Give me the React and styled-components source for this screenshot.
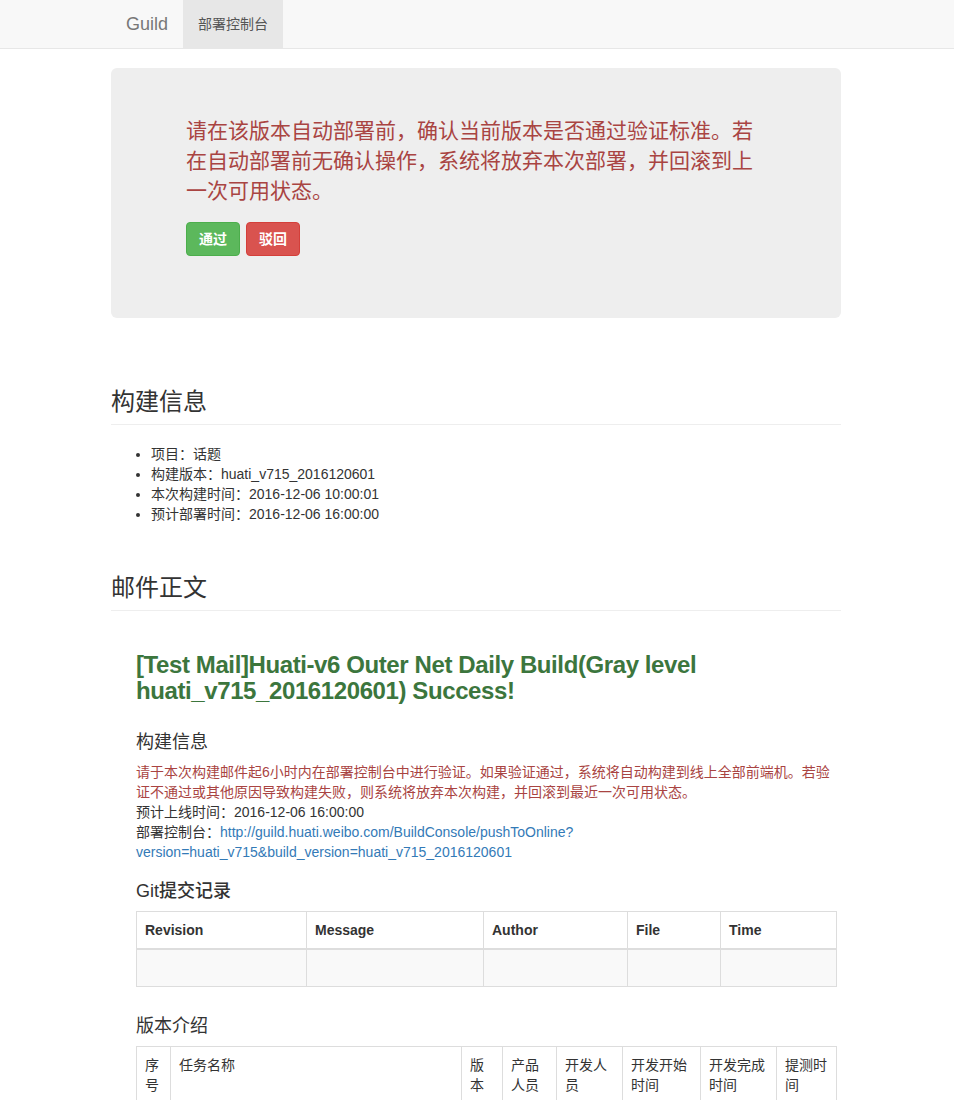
import React from "react";
import styled, { createGlobalStyle } from "styled-components";

const GlobalStyle = createGlobalStyle`
  html, body {
    margin: 0;
    padding: 0;
    background: #fff;
  }
  body {
    font-family: "Liberation Sans", "Noto Sans CJK SC", sans-serif;
    font-size: 14px;
    line-height: 20px;
    color: #333;
  }
  * { box-sizing: border-box; }
`;

const NavBar = styled.nav`
  background: #f8f8f8;
  border-bottom: 1px solid #e7e7e7;
  margin-bottom: 19px;
`;

const NavInner = styled.div`
  width: 732px;
  padding-right: 2px;
  margin: 0 auto;
  display: flex;
  align-items: stretch;
  height: 48px;
`;

const Brand = styled.a`
  display: block;
  padding: 14px 15px;
  font-size: 18px;
  line-height: 20px;
  color: #777;
  text-decoration: none;
`;

const NavItem = styled.a`
  display: block;
  padding: 14px 15px;
  font-size: 14px;
  line-height: 20px;
  color: #555;
  text-decoration: none;
  background: ${(p) => (p.$active ? "#e7e7e7" : "transparent")};
`;

const Container = styled.main`
  width: 732px;
  padding-right: 2px;
  margin: 0 auto;
  display: flex;
  flex-direction: column;
`;

const Jumbotron = styled.section`
  background: #eee;
  border-radius: 6px;
  padding: 48px 75px 62px;
`;

const JumboText = styled.p`
  margin: 0;
  font-size: 21px;
  line-height: 30px;
  color: #a94442;
`;

const ButtonRow = styled.div`
  display: flex;
  gap: 6px;
  margin-top: 16px;
`;

const Button = styled.button`
  font-family: inherit;
  font-size: 14px;
  line-height: 20px;
  font-weight: 700;
  padding: 6px 12px;
  border-radius: 4px;
  color: #fff;
  cursor: pointer;
  border: 1px solid ${(p) => (p.$variant === "danger" ? "#d43f3a" : "#4cae4c")};
  background: ${(p) => (p.$variant === "danger" ? "#d9534f" : "#5cb85c")};
`;

const PageHeader = styled.h3`
  margin: ${(p) => p.$mt}px 0 0;
  padding-bottom: 9px;
  border-bottom: 1px solid #eee;
  font-size: 24px;
  line-height: 26px;
  font-weight: 400;
  color: #333;
`;

const InfoList = styled.ul`
  margin: 19px 0 0;
  padding-left: 40px;
`;

const InfoItem = styled.li`
  line-height: 20px;
`;

const MailBody = styled.div`
  margin-top: 19px;
  padding-left: 25px;
  width: 725px;
  display: flex;
  flex-direction: column;
`;

const MailTitle = styled.h2`
  margin: 22px 0 0;
  font-size: 24px;
  line-height: 26px;
  font-weight: 700;
  letter-spacing: -0.4px;
  color: #3c763d;
`;

const MailHeading = styled.h4`
  margin: ${(p) => p.$mt}px 0 0;
  font-size: 18px;
  line-height: 20px;
  font-weight: ${(p) => (p.$strong ? 500 : 400)};
  color: #333;
`;

const InfoBlock = styled.div`
  margin-top: 10px;
`;

const Line = styled.div`
  color: ${(p) => (p.$danger ? "#a94442" : "#333")};
  line-height: 20px;
`;

const MailLink = styled.a`
  color: #337ab7;
  text-decoration: none;
`;

const DataTable = styled.table`
  margin-top: 10px;
  width: 700px;
  table-layout: fixed;
  border-collapse: collapse;
  border: 1px solid #ddd;
`;

const Col = styled.col`
  width: ${(p) => p.$w}px;
`;

const HeadCell = styled.th`
  text-align: left;
  vertical-align: bottom;
  padding: 8px;
  line-height: 20px;
  font-weight: 700;
  border: 1px solid #ddd;
  border-bottom: 2px solid #ddd;
`;

const Row = styled.tr`
  background: ${(p) => (p.$striped ? "#f9f9f9" : "#fff")};
`;

const Cell = styled.td`
  vertical-align: top;
  padding: 8px;
  line-height: 20px;
  border: 1px solid #ddd;
  color: #333;
`;

const gitCols = [
  { w: 170, label: "Revision" },
  { w: 177, label: "Message" },
  { w: 144, label: "Author" },
  { w: 93, label: "File" },
  { w: 116, label: "Time" },
];

const versionCols = [
  { w: 34, label: "序号" },
  { w: 291, label: "任务名称" },
  { w: 41, label: "版本" },
  { w: 54, label: "产品人员" },
  { w: 66, label: "开发人员" },
  { w: 78, label: "开发开始时间" },
  { w: 76, label: "开发完成时间" },
  { w: 60, label: "提测时间" },
];

export default function App() {
  return (
    <>
      <GlobalStyle />
      <NavBar>
        <NavInner>
          <Brand href="#">Guild</Brand>
          <NavItem href="#" $active>
            部署控制台
          </NavItem>
        </NavInner>
      </NavBar>
      <Container>
        <Jumbotron>
          <JumboText>
            请在该版本自动部署前，确认当前版本是否通过验证标准。若在自动部署前无确认操作，系统将放弃本次部署，并回滚到上一次可用状态。
          </JumboText>
          <ButtonRow>
            <Button $variant="success">通过</Button>
            <Button $variant="danger">驳回</Button>
          </ButtonRow>
        </Jumbotron>

        <PageHeader $mt={71}>构建信息</PageHeader>
        <InfoList>
          <InfoItem>项目：话题</InfoItem>
          <InfoItem>构建版本：huati_v715_2016120601</InfoItem>
          <InfoItem>本次构建时间：2016-12-06 10:00:01</InfoItem>
          <InfoItem>预计部署时间：2016-12-06 16:00:00</InfoItem>
        </InfoList>

        <PageHeader $mt={51}>邮件正文</PageHeader>
        <MailBody>
          <MailTitle>
            [Test Mail]Huati-v6 Outer Net Daily Build(Gray level
            huati_v715_2016120601) Success!
          </MailTitle>
          <MailHeading $mt={28}>构建信息</MailHeading>
          <InfoBlock>
            <Line $danger>
              请于本次构建邮件起6小时内在部署控制台中进行验证。如果验证通过，系统将自动构建到线上全部前端机。若验证不通过或其他原因导致构建失败，则系统将放弃本次构建，并回滚到最近一次可用状态。
            </Line>
            <Line>预计上线时间：2016-12-06 16:00:00</Line>
            <Line>
              部署控制台：
              <MailLink href="#">
                http://guild.huati.weibo.com/BuildConsole/pushToOnline?
                <wbr />
                version=huati_v715&amp;build_version=huati_v715_2016120601
              </MailLink>
            </Line>
          </InfoBlock>

          <MailHeading $mt={19} $strong>
            Git提交记录
          </MailHeading>
          <DataTable>
            <colgroup>
              {gitCols.map((c) => (
                <Col key={c.label} $w={c.w} />
              ))}
            </colgroup>
            <thead>
              <tr>
                {gitCols.map((c) => (
                  <HeadCell key={c.label}>{c.label}</HeadCell>
                ))}
              </tr>
            </thead>
            <tbody>
              <Row $striped>
                {gitCols.map((c) => (
                  <Cell key={c.label}>&nbsp;</Cell>
                ))}
              </Row>
            </tbody>
          </DataTable>

          <MailHeading $mt={29}>版本介绍</MailHeading>
          <DataTable>
            <colgroup>
              {versionCols.map((c) => (
                <Col key={c.label} $w={c.w} />
              ))}
            </colgroup>
            <tbody>
              <Row>
                {versionCols.map((c) => (
                  <Cell key={c.label}>{c.label}</Cell>
                ))}
              </Row>
              <Row $striped>
                {versionCols.map((c) => (
                  <Cell key={c.label}>&nbsp;</Cell>
                ))}
              </Row>
            </tbody>
          </DataTable>
        </MailBody>
      </Container>
    </>
  );
}
